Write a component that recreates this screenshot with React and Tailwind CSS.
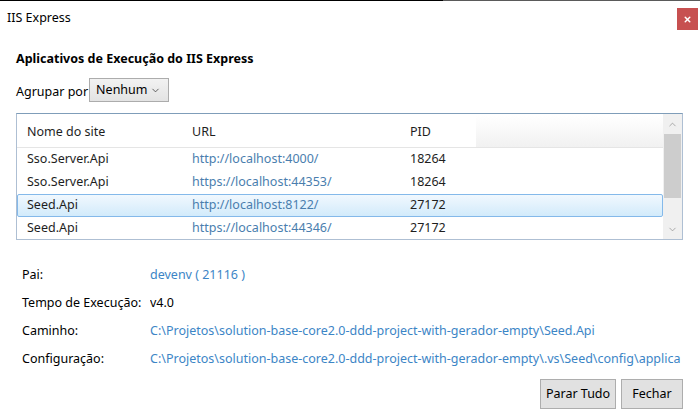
import { ChevronDown, ChevronUp, X } from "lucide-react";

const sites = [
  { name: "Sso.Server.Api", url: "http://localhost:4000/", pid: "18264" },
  { name: "Sso.Server.Api", url: "https://localhost:44353/", pid: "18264" },
  { name: "Seed.Api", url: "http://localhost:8122/", pid: "27172", selected: true },
  { name: "Seed.Api", url: "https://localhost:44346/", pid: "27172" },
];

const details = [
  { label: "Pai:", value: "devenv ( 21116 )", link: true },
  { label: "Tempo de Execução:", value: "v4.0" },
  {
    label: "Caminho:",
    value: "C:\\Projetos\\solution-base-core2.0-ddd-project-with-gerador-empty\\Seed.Api",
    link: true,
  },
  {
    label: "Configuração:",
    value:
      "C:\\Projetos\\solution-base-core2.0-ddd-project-with-gerador-empty\\.vs\\Seed\\config\\applica",
    link: true,
  },
];

export default function App() {
  return (
    <div
      className="w-[700px] h-[420px] bg-white flex flex-col overflow-hidden text-[12.5px] text-[#1e1e1e]"
      style={{ fontFamily: '"Noto Sans", "Open Sans", sans-serif' }}
    >
      {/* window top edge */}
      <div className="h-[1px] flex shrink-0">
        <div className="w-[443px] bg-black" />
        <div className="flex-1 bg-[#5a5a5a]" />
      </div>

      {/* title bar */}
      <div className="h-[37px] shrink-0 flex justify-between">
        <div className="pl-[7px] pt-[8px] leading-[18px] text-[12.5px] text-black">IIS Express</div>
        <div className="pt-[7px] pr-[2px]">
          <div className="w-[21px] h-[22px] bg-[#c75050] flex items-center justify-center">
            <X size={9} strokeWidth={4} color="white" />
          </div>
        </div>
      </div>

      <div className="px-4 flex flex-col">
        <div className="mt-[11px] h-[20px] leading-[20px] font-bold text-black">
          Aplicativos de Execução do IIS Express
        </div>

        {/* group by */}
        <div className="mt-[9px] h-[24px] flex items-center">
          <span className="mt-[4px] text-black">Agrupar por</span>
          <div className="ml-[1px] w-[80px] h-[24px] border border-[#acacac] bg-gradient-to-b from-[#f2f2f2] to-[#e3e3e3] flex items-center justify-between pl-[6px] pr-[7px] text-black">
            <span>Nenhum</span>
            <ChevronDown size={11} strokeWidth={1.8} color="#444" />
          </div>
        </div>

        {/* site list */}
        <div className="mt-[11px] h-[127px] w-[667px] border border-[#aebfd3] border-t-[#7f9db9] flex overflow-hidden">
          <div className="flex-1 flex flex-col">
            <div className="h-[34px] shrink-0 flex border-b border-[#e5e5e5]">
              <div className="w-[175px] pl-[10px] pt-[3px] flex items-center">Nome do site</div>
              <div className="w-[218px] pt-[3px] flex items-center">URL</div>
              <div className="w-[66px] pt-[3px] flex items-center">PID</div>
              <div className="flex-1 mt-[2px] bg-gradient-to-b from-white to-[#f1f1f1]" />
            </div>
            {sites.map((s, i) => (
              <div
                key={i}
                className={
                  s.selected
                    ? "h-[23px] shrink-0 flex items-center border border-[#84b9ea] rounded-[2px] bg-gradient-to-b from-[#f1f8fe] to-[#d2ebfb]"
                    : "h-[23px] shrink-0 flex items-center border border-transparent"
                }
              >
                <div className="w-[174px] pl-[9px]">{s.name}</div>
                <div className="w-[218px] text-[#4a7eae]">{s.url}</div>
                <div className="w-[66px]">{s.pid}</div>
              </div>
            ))}
          </div>

          {/* scrollbar */}
          <div className="w-[19px] bg-[#f0f0f0] flex flex-col">
            <div className="h-[20px] flex items-center justify-center">
              <ChevronUp size={11} strokeWidth={1.5} color="#8a8a8a" />
            </div>
            <div className="h-[64px] mx-[1px] bg-[#cdcdcd]" />
            <div className="flex-1" />
            <div className="h-[20px] flex items-center justify-center">
              <ChevronDown size={11} strokeWidth={1.5} color="#8a8a8a" />
            </div>
          </div>
        </div>

        {/* details */}
        <div className="mt-[21px] flex flex-col">
          {details.map((d) => (
            <div key={d.label} className="h-[28px] flex items-center">
              <div className="w-[134px] pl-[6px] shrink-0 text-black">{d.label}</div>
              <div
                className={
                  "w-[533px] whitespace-nowrap overflow-hidden " +
                  (d.link ? "text-[#3c85c6]" : "text-black")
                }
              >
                {d.value}
              </div>
            </div>
          ))}
        </div>

        {/* buttons */}
        <div className="mt-[6px] flex justify-end gap-[5px] pr-[1px]">
          <button className="w-[76px] h-[30px] border border-[#adadad] bg-[#e1e1e1] text-black">
            Parar Tudo
          </button>
          <button className="w-[62px] h-[30px] border border-[#adadad] bg-[#e1e1e1] text-black">
            Fechar
          </button>
        </div>
      </div>
    </div>
  );
}
